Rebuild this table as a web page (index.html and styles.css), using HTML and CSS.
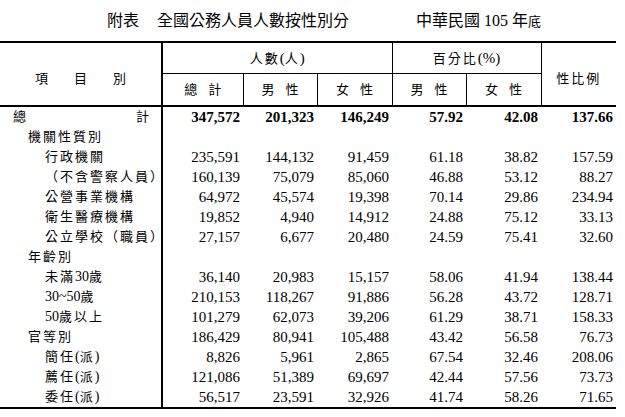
FILE: index.html
```html
<!DOCTYPE html>
<html lang="zh-Hant">
<head>
<meta charset="utf-8">
<title>附表 全國公務人員人數按性別分</title>
<link rel="stylesheet" href="styles.css">
</head>
<body>
<div class="title">
  <div class="title-left"><span>附表</span><span class="title-main">全國公務人員人數按性別分</span></div>
  <div class="title-right">中華民國 105 年<span class="small">底</span></div>
</div>
<table class="stats">
  <colgroup>
    <col class="c-label"><col class="c-a"><col class="c-b"><col class="c-c"><col class="c-d"><col class="c-e"><col class="c-f">
  </colgroup>
  <thead>
    <tr class="h1">
      <th rowspan="2" class="h-label"><span class="spread"><span>項</span><span>目</span><span>別</span></span></th>
      <th colspan="3">人數<span class="lat">(</span>人<span class="lat">)</span></th>
      <th colspan="2">百分比<span class="lat">(%)</span></th>
      <th rowspan="2" class="h-ratio">性比例</th>
    </tr>
    <tr class="h2">
      <th><span class="wide">總計</span></th>
      <th><span class="wide">男性</span></th>
      <th><span class="wide">女性</span></th>
      <th><span class="wide">男性</span></th>
      <th><span class="wide">女性</span></th>
    </tr>
  </thead>
  <tbody>
    <tr class="total">
      <td class="lbl"><span class="justify"><span>總</span><span>計</span></span></td>
      <td>347,572</td><td>201,323</td><td>146,249</td><td>57.92</td><td>42.08</td><td>137.66</td>
    </tr>
    <tr><td class="lbl l1">機關性質別</td><td></td><td></td><td></td><td></td><td></td><td></td></tr>
    <tr><td class="lbl l2">行政機關</td><td>235,591</td><td>144,132</td><td>91,459</td><td>61.18</td><td>38.82</td><td>157.59</td></tr>
    <tr><td class="lbl l2">（不含警察人員）</td><td>160,139</td><td>75,079</td><td>85,060</td><td>46.88</td><td>53.12</td><td>88.27</td></tr>
    <tr><td class="lbl l2">公營事業機構</td><td>64,972</td><td>45,574</td><td>19,398</td><td>70.14</td><td>29.86</td><td>234.94</td></tr>
    <tr><td class="lbl l2">衛生醫療機構</td><td>19,852</td><td>4,940</td><td>14,912</td><td>24.88</td><td>75.12</td><td>33.13</td></tr>
    <tr><td class="lbl l2">公立學校（職員）</td><td>27,157</td><td>6,677</td><td>20,480</td><td>24.59</td><td>75.41</td><td>32.60</td></tr>
    <tr><td class="lbl l1">年齡別</td><td></td><td></td><td></td><td></td><td></td><td></td></tr>
    <tr><td class="lbl l2">未滿<span class="lat">30</span>歲</td><td>36,140</td><td>20,983</td><td>15,157</td><td>58.06</td><td>41.94</td><td>138.44</td></tr>
    <tr><td class="lbl l2"><span class="lat">30~50</span>歲</td><td>210,153</td><td>118,267</td><td>91,886</td><td>56.28</td><td>43.72</td><td>128.71</td></tr>
    <tr><td class="lbl l2"><span class="lat">50</span>歲以上</td><td>101,279</td><td>62,073</td><td>39,206</td><td>61.29</td><td>38.71</td><td>158.33</td></tr>
    <tr><td class="lbl l1">官等別</td><td>186,429</td><td>80,941</td><td>105,488</td><td>43.42</td><td>56.58</td><td>76.73</td></tr>
    <tr><td class="lbl l2">簡任<span class="lat">(</span>派<span class="lat">)</span></td><td>8,826</td><td>5,961</td><td>2,865</td><td>67.54</td><td>32.46</td><td>208.06</td></tr>
    <tr><td class="lbl l2">薦任<span class="lat">(</span>派<span class="lat">)</span></td><td>121,086</td><td>51,389</td><td>69,697</td><td>42.44</td><td>57.56</td><td>73.73</td></tr>
    <tr><td class="lbl l2">委任<span class="lat">(</span>派<span class="lat">)</span></td><td>56,517</td><td>23,591</td><td>32,926</td><td>41.74</td><td>58.26</td><td>71.65</td></tr>
  </tbody>
</table>
</body>
</html>
```

FILE: styles.css
```css
body {
  margin: 0;
  background: #fff;
  color: #000;
  font-family: "Liberation Serif", "Noto Sans CJK TC", serif;
}

.title {
  display: flex;
  justify-content: space-between;
  align-items: center;
  width: 434px;
  height: 41px;
  margin-left: 107px;
  font-size: 16px;
  line-height: 1;
  box-sizing: border-box;
  padding-bottom: 0;
}

.title-left {
  display: flex;
  gap: 18px;
}

.title-right .small {
  font-size: 13px;
}

.stats {
  border-collapse: collapse;
  table-layout: fixed;
  width: 616px;
}

.c-label { width: 162px; }
.c-a { width: 81px; }
.c-b { width: 74px; }
.c-c { width: 75px; }
.c-d { width: 74px; }
.c-e { width: 75px; }
.c-f { width: 75px; }

.stats th {
  font-weight: normal;
  font-size: 13px;
  letter-spacing: 2px;
  line-height: 16px;
  padding: 0;
  border: 1px solid #000;
  text-align: center;
  vertical-align: middle;
}

.stats .h1 th {
  border-top: 2px solid #000;
  height: 30px;
}

.stats .h2 th {
  border-bottom: 2px solid #000;
  height: 31px;
}

.stats th.h-label {
  border-left: none;
  border-right: 2px solid #000;
  border-bottom: 2px solid #000;
  padding-top: 9px;
}

.stats th.h-ratio {
  border-right: none;
  border-bottom: 2px solid #000;
  padding-top: 9px;
}

.spread {
  display: inline-flex;
  gap: 26px;
  letter-spacing: 0;
}

.wide {
  letter-spacing: 11px;
  margin-right: -11px;
}

.stats th .lat {
  font-size: 15px;
  letter-spacing: 0;
}

.stats td {
  height: 20px;
  padding: 0 3px 0 0;
  line-height: 20px;
  font-size: 15px;
  text-align: right;
  white-space: nowrap;
  vertical-align: middle;
}

.stats td.lbl {
  font-size: 13px;
  letter-spacing: 2px;
  text-align: left;
  border-right: 2px solid #000;
  padding: 0;
}

.stats td.l1 { padding-left: 28px; }
.stats td.l2 { padding-left: 45px; }

.lat {
  font-size: 14px;
  letter-spacing: 0;
}

.justify {
  display: flex;
  justify-content: space-between;
  padding: 0 10px 0 13px;
}

.total td {
  font-weight: bold;
}

.total td.lbl {
  font-weight: normal;
}

.stats tbody tr:last-child td {
  border-bottom: 2px solid #000;
}
```
